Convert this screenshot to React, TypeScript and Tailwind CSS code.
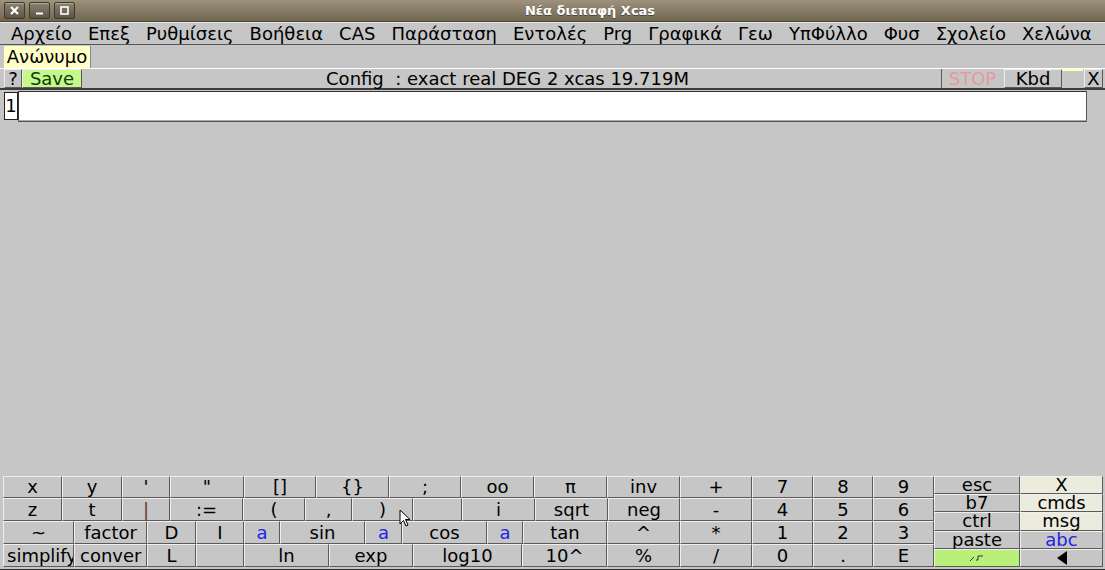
import React from "react";

const font = { fontFamily: '"DejaVu Sans", "Noto Sans", sans-serif' };

const up =
  "flex items-center justify-center whitespace-nowrap border border-t-[#efefef] border-l-[#efefef] border-r-[#5a5a5a] border-b-[#5a5a5a]";

type K = { t: string; w: string; c?: string };

function Key({ k }: { k: K }) {
  return <div className={`${up} h-full shrink-0 overflow-hidden ${k.w} ${k.c ?? "bg-[#c6c6c6] text-black"}`}>{k.t}</div>;
}

const blue = "bg-[#c6c6c6] text-[#2323e6]";

const rows: K[][] = [
  [
    { t: "x", w: "w-[59px]" },
    { t: "y", w: "w-[60px]" },
    { t: "'", w: "w-[48px]" },
    { t: '"', w: "w-[74px]" },
    { t: "[]", w: "w-[72px]" },
    { t: "{}", w: "w-[73px]" },
    { t: ";", w: "w-[72px]" },
    { t: "oo", w: "w-[73px]" },
    { t: "π", w: "w-[73px]" },
    { t: "inv", w: "w-[73px]" },
    { t: "+", w: "w-[72px]" },
    { t: "7", w: "w-[61px]" },
    { t: "8", w: "w-[60px]" },
    { t: "9", w: "w-[61px]" },
  ],
  [
    { t: "z", w: "w-[59px]" },
    { t: "t", w: "w-[60px]" },
    { t: "|", w: "w-[48px]", c: "bg-[#c6c6c6] text-[#5a3a2a]" },
    { t: ":=", w: "w-[73px]" },
    { t: "(", w: "w-[62px]" },
    { t: ",", w: "w-[47px]" },
    { t: ")", w: "w-[61px]" },
    { t: "", w: "w-[49px]" },
    { t: "i", w: "w-[73px]" },
    { t: "sqrt", w: "w-[73px]" },
    { t: "neg", w: "w-[72px]" },
    { t: "-", w: "w-[72px]" },
    { t: "4", w: "w-[61px]" },
    { t: "5", w: "w-[60px]" },
    { t: "6", w: "w-[61px]" },
  ],
  [
    { t: "~", w: "w-[71px]" },
    { t: "factor", w: "w-[73px]" },
    { t: "D", w: "w-[49px]" },
    { t: "I", w: "w-[48px]" },
    { t: "a", w: "w-[36px]", c: blue },
    { t: "sin", w: "w-[85px]" },
    { t: "a", w: "w-[37px]", c: blue },
    { t: "cos", w: "w-[85px]" },
    { t: "a", w: "w-[36px]", c: blue },
    { t: "tan", w: "w-[84px]" },
    { t: "^", w: "w-[73px]" },
    { t: "*", w: "w-[72px]" },
    { t: "1", w: "w-[61px]" },
    { t: "2", w: "w-[60px]" },
    { t: "3", w: "w-[61px]" },
  ],
  [
    { t: "simplify", w: "w-[71px]", c: "bg-[#c6c6c6] text-black !justify-start pl-[3px]" },
    { t: "conver", w: "w-[73px]", c: "bg-[#c6c6c6] text-black !justify-start pl-[5px]" },
    { t: "L", w: "w-[49px]" },
    { t: "", w: "w-[48px]" },
    { t: "ln", w: "w-[85px]" },
    { t: "exp", w: "w-[84px]" },
    { t: "log10", w: "w-[109px]" },
    { t: "10^", w: "w-[85px]" },
    { t: "%", w: "w-[73px]" },
    { t: "/", w: "w-[72px]" },
    { t: "0", w: "w-[61px]" },
    { t: ".", w: "w-[60px]" },
    { t: "E", w: "w-[61px]" },
  ],
];

const menus = ["Αρχείο", "Επεξ", "Ρυθμίσεις", "Βοήθεια", "CAS", "Παράσταση", "Εντολές", "Prg", "Γραφικά", "Γεω", "ΥπΦύλλο", "Φυσ", "Σχολείο", "Χελώνα"];

function WinBtn({ children }: { children: React.ReactNode }) {
  return (
    <div className="flex h-[17px] w-[21px] items-center justify-center rounded-[2px] border border-[#3e382f] bg-gradient-to-b from-[#8c8272] to-[#5c5446] shadow-[inset_0_1px_0_#b3a994]">
      {children}
    </div>
  );
}

export default function App() {
  return (
    <div className="relative flex h-[570px] w-[1105px] flex-col overflow-hidden bg-[#c6c6c6] text-[18px] leading-none" style={font}>
      {/* title bar */}
      <div className="flex h-[22px] shrink-0 items-center border-b border-[#4a4438] bg-gradient-to-b from-[#9e927c] to-[#716650] pl-[4px]">
        <div className="flex gap-[4px]">
          <WinBtn>
            <svg width="11" height="11" viewBox="0 0 11 11">
              <path d="M2 2 L9 9 M9 2 L2 9" stroke="#fff" strokeWidth="2.2" />
            </svg>
          </WinBtn>
          <WinBtn>
            <svg width="11" height="11" viewBox="0 0 11 11">
              <path d="M2 8.5 H9" stroke="#fff" strokeWidth="2" />
            </svg>
          </WinBtn>
          <WinBtn>
            <svg width="11" height="11" viewBox="0 0 11 11">
              <rect x="2" y="2" width="7" height="7" fill="none" stroke="#fff" strokeWidth="1.6" />
            </svg>
          </WinBtn>
        </div>
        <div className="flex-1 text-center text-[13px] font-bold text-white [text-shadow:0_1px_0_#4a4438]">Νέα διεπαφή Xcas</div>
      </div>

      {/* menu bar */}
      <div className="flex h-[23px] shrink-0 items-center border-t border-[#e8e8e8] border-b border-b-[#555] pl-[3px]">
        {menus.map((m) => (
          <span key={m} className="px-[8px]">
            {m}
          </span>
        ))}
      </div>

      {/* tab row */}
      <div className="flex h-[23px] shrink-0 items-stretch pl-[4px] pt-[1px]">
        <div className="flex w-[87px] items-center justify-center border-r border-[#888] bg-[#ffffc6]">Ανώνυμο</div>
      </div>

      {/* toolbar */}
      <div className="flex h-[22px] shrink-0 items-stretch border-t border-white border-b-2 border-b-[#3c3c3c] pl-[4px] pr-[2px]">
        <div className={`${up} w-[18px] bg-[#c6c6c6]`}>?</div>
        <div className={`${up} w-[60px] bg-[#c4f888] text-[#103a10]`}>Save</div>
        <div className="flex flex-1 items-center justify-center border-r border-[#5a5a5a] pr-[8px]">Config&nbsp; : exact real DEG 2 xcas 19.719M</div>
        <div className="flex w-[61px] items-center justify-center text-[#e49a9a]">STOP</div>
        <div className={`${up} ml-[1px] w-[58px] bg-[#c6c6c6]`}>Kbd</div>
        <div className="w-[21px] border-t-2 border-t-[#ffffb0]" />
        <div className={`${up} ml-[1px] w-[19px] bg-[#c6c6c6]`}>X</div>
      </div>

      {/* input line */}
      <div className="flex h-[31px] shrink-0 items-stretch pl-[4px] pt-[1px]">
        <div className="my-[1px] flex w-[14px] items-center justify-center border border-[#222] bg-white">1</div>
        <div className="w-[1069px] border-t border-t-[#333] border-l border-l-[#333] border-r border-r-[#555] border-b border-b-[#aaa] bg-white shadow-[0_1px_0_#555]" />
      </div>

      {/* empty worksheet */}
      <div className="flex-1" />

      {/* keyboard */}
      <div className="flex h-[93px] shrink-0 pl-[3px] pr-[2px] pb-[2px]">
        <div className="flex w-[931px] flex-col">
          {rows.map((r, i) => (
            <div key={i} className={`flex ${i === 0 ? "h-[22px]" : "h-[23px]"}`}>
              {r.map((k, j) => (
                <Key key={j} k={k} />
              ))}
            </div>
          ))}
        </div>
        <div className="flex w-[86px] flex-col">
          {["esc", "b7", "ctrl", "paste"].map((t) => (
            <div key={t} className={`${up} h-[18.2px] bg-[#c6c6c6]`}>
              {t}
            </div>
          ))}
          <div className={`${up} h-[18.2px] bg-[#b8f07a]`}>
            <svg width="16" height="8" viewBox="0 0 16 8">
              <path d="M1 7 L5 3 M7 6 H9 V2 H14" stroke="#333" strokeWidth="1" fill="none" />
            </svg>
          </div>
        </div>
        <div className="flex w-[83px] flex-col">
          {["X", "cmds", "msg"].map((t) => (
            <div key={t} className={`${up} h-[18.2px] bg-[#ebebde]`}>
              {t}
            </div>
          ))}
          <div className={`${up} h-[18.2px] ${blue}`}>abc</div>
          <div className={`${up} h-[18.2px] bg-[#c6c6c6]`}>
            <svg width="12" height="14" viewBox="0 0 12 14">
              <path d="M11 0 V14 L1 7 Z" fill="#000" />
            </svg>
          </div>
        </div>
      </div>
      <div className="h-[1px] shrink-0 bg-[#333]" />

      {/* mouse pointer */}
      <svg className="absolute left-[399px] top-[509px]" width="12" height="19" viewBox="0 0 12 19">
        <path d="M1 1 V15 L4.5 11.5 L7 17 L9 16 L6.5 10.5 H11 Z" fill="#fff" stroke="#000" strokeWidth="1" />
      </svg>
    </div>
  );
}
